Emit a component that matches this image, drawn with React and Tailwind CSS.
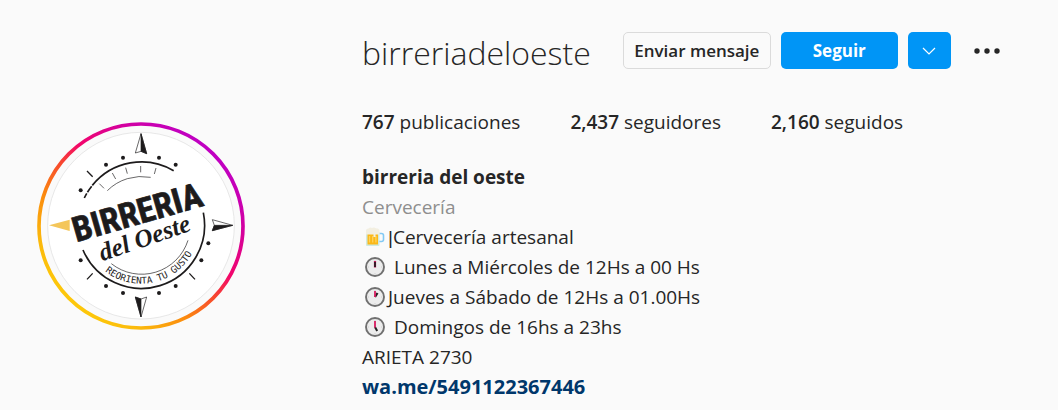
import React from "react";

const DOTS = [
  [152, 226], [228, 149], [279, 128], [387, 128], [437, 149],
  [535, 385], [514, 436], [437, 513], [387, 534], [279, 534], [228, 513], [152, 436],
];

function Avatar() {
  return (
    <svg viewBox="21 21 624 624" className="block w-full" role="img" aria-label="Birreria del Oeste">
      <defs>
        <linearGradient id="ring" gradientUnits="userSpaceOnUse" x1="130" y1="560" x2="530" y2="100">
          <stop offset="0" stopColor="#fdc70a" />
          <stop offset="0.12" stopColor="#fbb80c" />
          <stop offset="0.3" stopColor="#fb8a0e" />
          <stop offset="0.48" stopColor="#f7452f" />
          <stop offset="0.6" stopColor="#f3066a" />
          <stop offset="0.82" stopColor="#d300a0" />
          <stop offset="1" stopColor="#c000c2" />
        </linearGradient>
        <path id="motto" d="M 225 469 A 175 175 0 0 0 508 333" />
      </defs>
      <circle cx="333" cy="333" r="306" fill="none" stroke="url(#ring)" strokeWidth="11" />
      <circle cx="333" cy="332" r="280" fill="#fff" stroke="#dcdcdc" strokeWidth="2" />
      <g fill="none" stroke="#1d1b1c">
        <path d="M163 249 A190 190 0 0 1 431 167" strokeWidth="5" strokeDasharray="16 4 22 3 400" />
        <path d="M159 405 A190 190 0 0 0 520 293" strokeWidth="5" />
        <path d="M232 227 A146 146 0 0 1 362 187" strokeWidth="2" />
        <path d="M244 446 A146 146 0 0 0 474 376" strokeWidth="2" />
        <path d="M208 206l14 14M247 174l10 18M287 158l5 18M332 153v19M378 159l-5 18" strokeWidth="2" />
        <path d="M171 168l17 17M188 475l-17 18M478 475l17 18" strokeWidth="4" />
      </g>
      {DOTS.map(([x, y]) => (
        <circle key={`${x}-${y}`} cx={x} cy={y} r="6" fill="#1d1b1c" />
      ))}
      <g stroke="#1d1b1c" strokeWidth="2" strokeLinejoin="round">
        <path d="M333 56L316 114L333 109L350 116Z" fill="#fff" />
        <path d="M333 56V109L350 116Z" fill="#1d1b1c" />
        <path d="M333 606L316 546L333 552L350 546Z" fill="#fff" />
        <path d="M333 606V552L316 546Z" fill="#1d1b1c" />
        <path d="M608 331L547 314L553 331L547 347Z" fill="#fff" />
        <path d="M608 331H553L547 347Z" fill="#1d1b1c" />
      </g>
      <path d="M57 331L119 314V348Z" fill="#f4c65a" />
      <text
        transform="translate(139 382) rotate(-16)"
        fontFamily="'Roboto Condensed', Roboto, sans-serif"
        fontWeight="700"
        fontSize="104"
        fill="#1d1b1c"
        stroke="#1d1b1c"
        strokeWidth="2"
      >
        BIRRERIA
      </text>
      <text
        transform="translate(217 439) rotate(-19)"
        fontFamily="'Liberation Serif', serif"
        fontStyle="italic"
        fontWeight="700"
        fontSize="76"
        fill="#1d1b1c"
      >
        del Oeste
      </text>
      <text fontFamily="'DejaVu Sans Mono', monospace" fontSize="28" fill="#1d1b1c">
        <textPath href="#motto">REORIENTA TU GUSTO</textPath>
      </text>
    </svg>
  );
}

function Beer() {
  return (
    <svg viewBox="0 0 20 20" className="mx-[3px] size-5 shrink-0" aria-hidden="true">
      <path d="M14 6.500h2.500q2 0 2 2v4q0 2-2 2h-2.500" fill="none" stroke="#83c9f3" strokeWidth="1.600" />
      <path d="M1 5h13.500v13q0 1-1 1h-11.500q-1 0-1-1z" fill="#cfe9df" />
      <path d="M2.500 6h10.500v11.500h-10.500z" fill="#fbb817" />
      <path d="M4.500 9v6.500M7.700 9v6.500M10.900 9v6.500" stroke="#fdd35e" strokeWidth="1.300" />
      <path d="M1 7.500v-4q0-2 2.500-2q1.500-1.500 3.500-.5q2-1.200 4 .3q3.500 0 3.500 2.700v3.500h-4v2.500h-2v-2.500z" fill="#f3efe1" />
    </svg>
  );
}

function Clock({ children }) {
  return (
    <svg viewBox="0 0 20 20" className="mx-[3px] size-5 shrink-0" aria-hidden="true">
      <circle cx="10" cy="10" r="9" fill="#ececec" stroke="#707070" strokeWidth="1.900" />
      <path d="M10 2.800v1M10 16.200v1M2.800 10h1M16.200 10h1" stroke="#c8c8c8" />
      {children}
    </svg>
  );
}

function Stat({ value, label }) {
  return (
    <li>
      <span className="font-semibold">{value}</span> {label}
    </li>
  );
}

export default function App() {
  return (
    <main className="flex min-h-screen items-start bg-[#fafafa] pr-8 pb-2 pl-[37px] pt-8 font-['Open_Sans','Noto_Sans',sans-serif] text-[19px] leading-[30px] text-[#262626]">
      <div className="mt-[90px] mr-[117px] w-52 shrink-0">
        <Avatar />
      </div>
      <section className="min-w-0 flex-1">
        <header className="flex items-center">
          <h1 className="mr-8 pt-1 text-[32px] leading-8 font-light">birreriadeloeste</h1>
          <div className="flex items-center gap-[10px]">
            <button className="h-[37px] w-[148px] rounded-[5px] border border-[#dbdbdb] text-[17px] leading-6 font-semibold whitespace-nowrap">
              Enviar mensaje
            </button>
            <button className="h-[37px] w-[117px] rounded-[5px] bg-[#0095f6] text-[17px] leading-6 font-bold text-white">
              Seguir
            </button>
            <button aria-label="Sugerencias" className="flex h-[37px] w-[43px] items-center justify-center rounded-[5px] bg-[#0095f6]">
              <svg viewBox="0 0 14 8" className="h-2 w-[14px]" fill="none" stroke="#fff" strokeWidth="1.200" aria-hidden="true">
                <path d="M1 1l6 6l6-6" />
              </svg>
            </button>
          </div>
          <button aria-label="Opciones" className="ml-[23px]">
            <svg viewBox="0 0 26 6" className="h-[6px] w-[26px]" fill="#262626" aria-hidden="true">
              <circle cx="3" cy="3" r="2.700" />
              <circle cx="13" cy="3" r="2.700" />
              <circle cx="23" cy="3" r="2.700" />
            </svg>
          </button>
        </header>
        <ul className="mt-[38px] flex gap-[50px]">
          <Stat value="767" label="publicaciones" />
          <Stat value="2,437" label="seguidores" />
          <Stat value="2,160" label="seguidos" />
        </ul>
        <div className="mt-[25px]">
          <h2 className="font-bold">birreria del oeste</h2>
          <p className="text-[#8e8e8e]">Cervecería</p>
          <p className="flex items-center">
            <Beer />
            <span><span className="font-['Liberation_Sans',sans-serif] leading-none">|</span>Cervecería artesanal</span>
          </p>
          <p className="flex items-center gap-[6px]">
            <Clock>
              <path d="M10 4v6.500" stroke="#c2185b" strokeWidth="2.200" />
              <path d="M10 5v5" stroke="#2b1c22" strokeWidth="1.800" />
            </Clock>
            Lunes a Miércoles de 12Hs a 00 Hs
          </p>
          <p className="flex items-center">
            <Clock>
              <path d="M10 10l2.500-4" stroke="#222" strokeWidth="2.200" />
              <path d="M10 4v6" stroke="#d81b60" strokeWidth="1.800" />
            </Clock>
            Jueves a Sábado de 12Hs a 01.00Hs
          </p>
          <p className="flex items-center gap-[6px]">
            <Clock>
              <path d="M10 10l2.200 4" stroke="#222" strokeWidth="2" />
              <path d="M10 4v6.500" stroke="#d81b60" strokeWidth="1.800" />
            </Clock>
            Domingos de 16hs a 23hs
          </p>
          <p>ARIETA 2730</p>
          <a href="https://wa.me/5491122367446" className="block w-fit text-[20px] font-bold text-[#00376b]">
            wa.me/5491122367446
          </a>
        </div>
      </section>
    </main>
  );
}
